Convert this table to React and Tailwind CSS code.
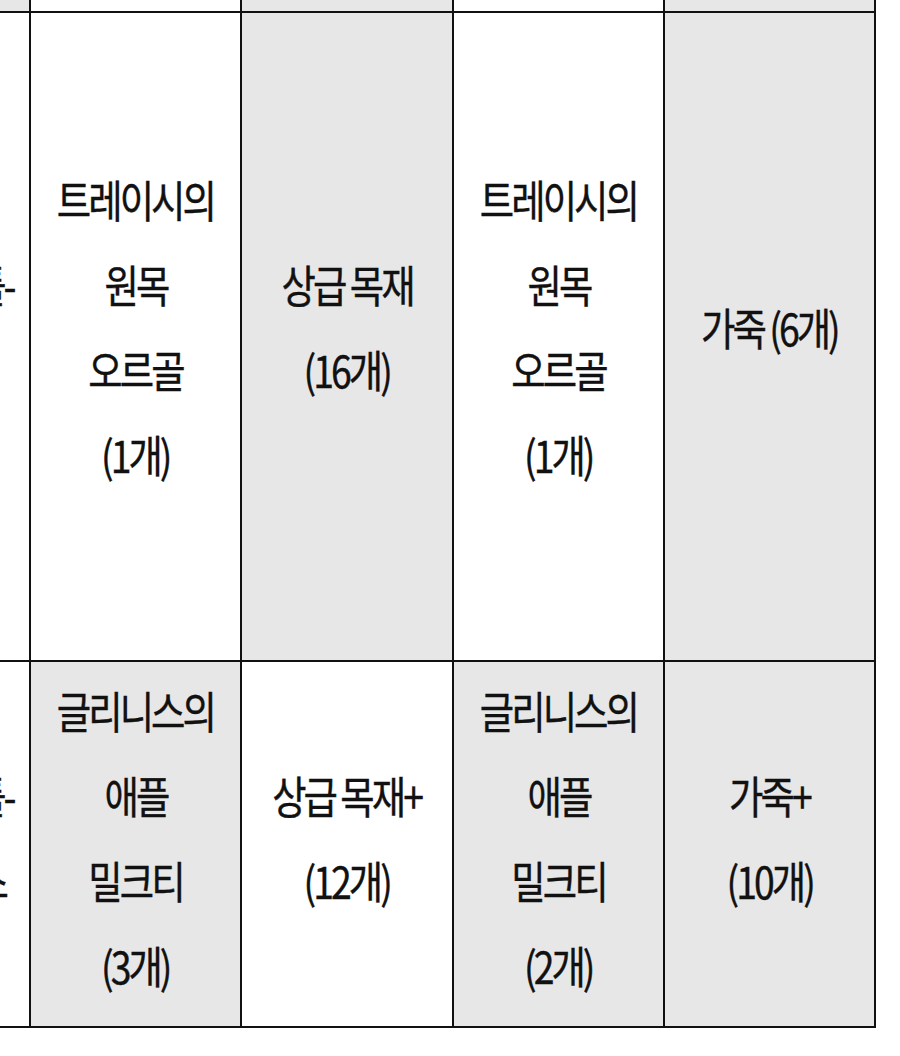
import React from 'react';

const rows = [
  {
    height: 'h-[13px]',
    cells: [
      { gray: true, lines: [] },
      { gray: false, lines: [] },
      { gray: true, lines: [] },
      { gray: false, lines: [] },
      { gray: true, lines: [] },
    ],
  },
  {
    height: 'h-[649px] pb-[19px]',
    cells: [
      { gray: false, lines: ['제작', '세공 도구 툴-', '재료', '(1개)'] },
      { gray: false, lines: ['트레이시의', '원목', '오르골', '(1개)'] },
      { gray: true, lines: ['상급 목재', '(16개)'] },
      { gray: false, lines: ['트레이시의', '원목', '오르골', '(1개)'] },
      { gray: true, lines: ['가죽 (6개)'] },
    ],
  },
  {
    height: 'h-[366px] pb-[12px]',
    cells: [
      { gray: false, lines: ['제작', '세공 도구 툴-', '레벨 보너스', '(1개)'] },
      { gray: true, lines: ['글리니스의', '애플', '밀크티', '(3개)'] },
      { gray: false, lines: ['상급 목재+', '(12개)'] },
      { gray: true, lines: ['글리니스의', '애플', '밀크티', '(2개)'] },
      { gray: true, lines: ['가죽+', '(10개)'] },
    ],
  },
];

export default function App() {
  return (
    <div className="w-[900px] h-[1056px] overflow-hidden bg-white">
      <div
        className="ml-[-180px] grid grid-cols-[211px_211px_212px_211px_211px] w-max text-[44px] font-normal leading-[85px] tracking-[-0.08em] text-[#111] [-webkit-text-stroke:0.4px_#111]"
        style={{ fontFamily: '"Noto Sans CJK KR", "Noto Sans", sans-serif' }}
      >
        {rows.map((row, r) =>
          row.cells.map((cell, c) => (
            <div
              key={`${r}-${c}`}
              className={`${row.height} border-r-2 border-b-2 border-[#111] flex flex-col items-center justify-center text-center whitespace-nowrap overflow-hidden ${
                cell.gray ? 'bg-[#e7e7e7]' : 'bg-white'
              }`}
            >
              {cell.lines.map((line, i) => (
                <div key={i} className="scale-x-[0.85]">
                  {line}
                </div>
              ))}
            </div>
          ))
        )}
      </div>
    </div>
  );
}
